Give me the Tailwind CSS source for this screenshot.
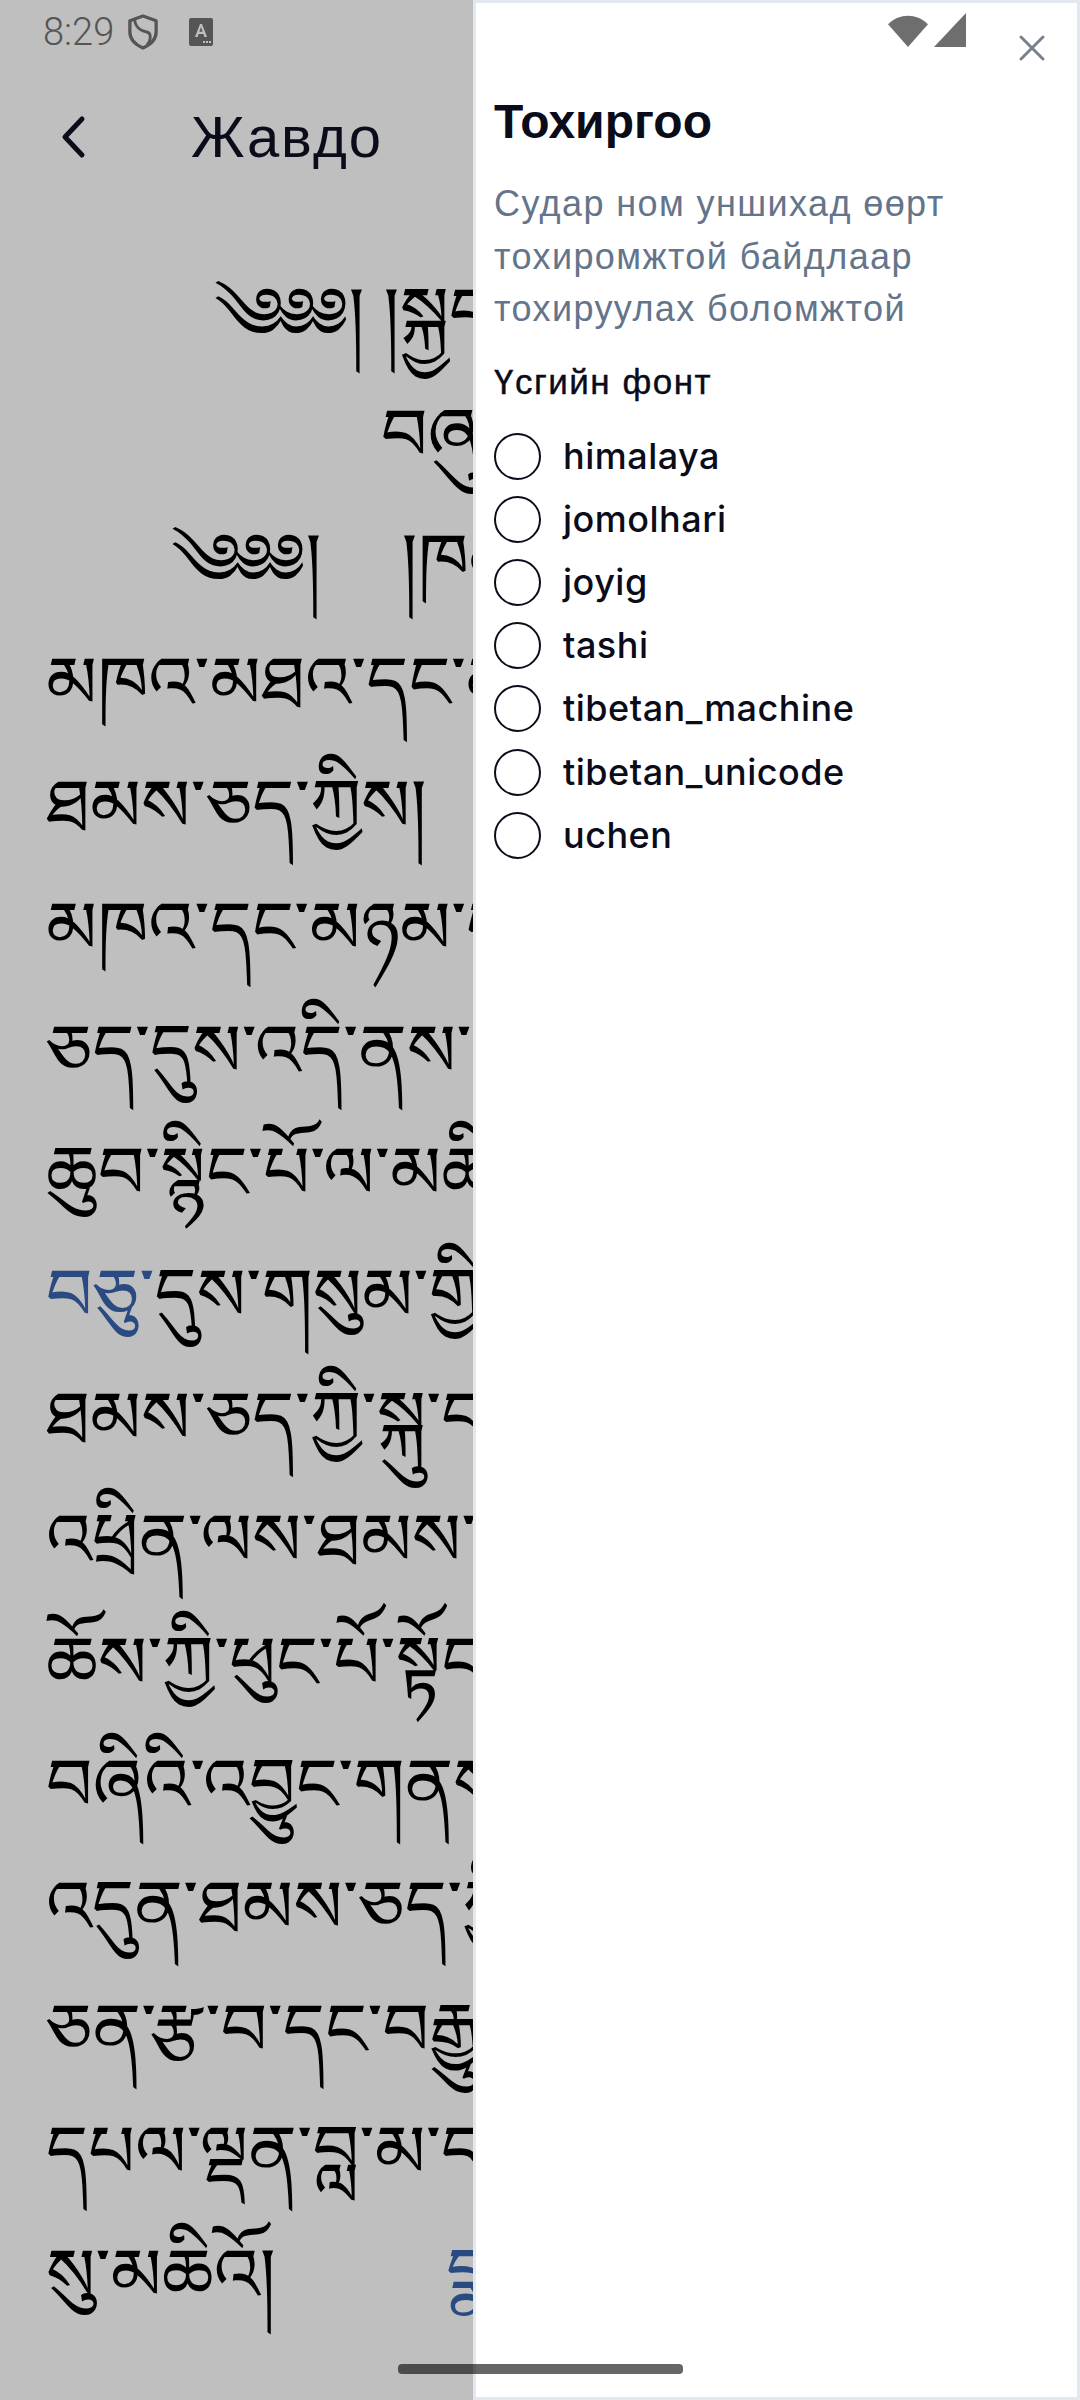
<!DOCTYPE html>
<html lang="mn">
<head>
    <meta charset="UTF-8">
    <meta name="viewport" content="width=device-width, initial-scale=1.0">
    <title>Жавдо</title>
    <script src="https://cdn.jsdelivr.net/npm/@tailwindcss/browser@4"></script>
</head>
<body class="bg-[#bfbfbf]">
    <div class="relative w-[1080px] h-[2400px] overflow-hidden font-['Liberation_Sans',sans-serif]">
        <!-- Status bar -->
        <div class="flex items-center h-[64px] pl-[43px] text-[#555] text-[38px] leading-none font-['Roboto',sans-serif] font-light">
            <span>8:29</span>
            <svg class="ml-[14px]" width="30" height="36" viewBox="0 0 32 38" fill="none" stroke="#555" stroke-width="3.5" stroke-linejoin="round"><path d="M16 2 L30 7 V19 C30 28 23 33 16 36 C9 33 2 28 2 19 V7 Z"/><path d="M7 6 C8 14 14 18 20 19 C25 20 25 28 20 33" stroke-width="3"/></svg>
            <svg class="ml-[31px]" width="24" height="28" viewBox="0 0 24 28"><rect width="24" height="28" rx="2" fill="#555"/><path d="M6 19 L11 6 H13 L18 19 H15.4 L14.4 16 H9.6 L8.6 19 Z M10.4 13.8 H13.6 L12 9 Z" fill="#bfbfbf"/><rect x="14" y="23" width="2" height="2" fill="#bfbfbf"/><rect x="17" y="23" width="2" height="2" fill="#bfbfbf"/><rect x="20" y="23" width="2" height="2" fill="#bfbfbf"/></svg>
        </div>
        <!-- Header -->
        <div class="flex items-center h-[74px] mt-[36px] text-[#0a0c1a]">
            <svg class="ml-[60px]" width="28" height="44" viewBox="0 0 28 44" fill="none" stroke="#0a0c1a" stroke-width="5" stroke-linecap="round" stroke-linejoin="round"><path d="M22 4 L5 22 L22 40"/></svg>
            <span class="ml-[103px] text-[58px] leading-none tracking-[1.8px]">Жавдо</span>
        </div>
        <!-- Tibetan text -->
        <div class="mt-[100px] pl-[46px] w-[1000px] text-black text-[73px] leading-[122.4px] whitespace-nowrap font-['Noto_Sans_Tibetan','Noto_Serif_Tibetan','DejaVu_Sans',sans-serif]">
            <div class="pl-[168px]">༄༅༅། །སྐྱབས་འགྲོ་</div>
            <div class="pl-[335px] leading-[80px] mt-[20px]">བཞུགས་སོ།</div>
            <div class="pl-[125px] leading-[100px] mt-[35px]">༄༅༅།&nbsp;&nbsp;&nbsp;<span class="ml-[23px]">།ཁམས་</span></div>
            <div class="mt-[12px]">མཁའ་མཐའ་དང་མཉམ་</div>
            <div>ཐམས་ཅད་ཀྱིས།</div>
            <div>མཁའ་དང་མཉམ་པའི་</div>
            <div>ཅད་དུས་འདི་ནས་བཟུང་</div>
            <div>ཆུབ་སྙིང་པོ་ལ་མཆི་</div>
            <div><span class="text-[#2a4a82]">བཅུ་</span>དུས་གསུམ་གྱི་</div>
            <div>ཐམས་ཅད་ཀྱི་སྐུ་བ་</div>
            <div>འཕྲིན་ལས་ཐམས་ཅད་</div>
            <div>ཆོས་ཀྱི་ཕུང་པོ་སྟོང་</div>
            <div>བཞིའི་འབྱུང་གནས་</div>
            <div>འདུན་ཐམས་ཅད་ཀྱི་</div>
            <div>ཅན་རྩ་བ་དང་བརྒྱུད་</div>
            <div>དཔལ་ལྡན་བླ་མ་དམ་</div>
            <div>སུ་མཆིའོ།<span class="ml-[170px] text-[#2a4a82]">བྣ་</span></div>
        </div>
        <!-- Drawer -->
        <div class="absolute top-0 bottom-0 right-0 w-[607px] bg-white border-[3px] border-[#e2e8f0]">
            <div class="absolute top-[10px] right-[111px] flex items-start gap-[4px]">
                <svg width="42" height="34" viewBox="0 0 40 36" preserveAspectRatio="none"><path d="M20 36 L1 12 C12 0 28 0 39 12 Z" fill="#6e6e6e"/></svg>
                <svg width="33" height="34" viewBox="0 0 33 36" preserveAspectRatio="none"><path d="M33 0 V36 H1 Z" fill="#6e6e6e"/></svg>
            </div>
            <button class="absolute top-[31px] right-[31px]">
                <svg width="28" height="28" viewBox="0 0 28 28" fill="none" stroke="#76808f" stroke-width="3" stroke-linecap="round"><path d="M3 3 L25 25 M25 3 L3 25"/></svg>
            </button>
            <div class="pt-[91px] pl-[18px] pr-[30px]">
                <h2 class="text-[48px] leading-[56px] font-bold text-[#0a0c1a]">Тохиргоо</h2>
                <p class="mt-[28px] text-[36px] leading-[52.5px] tracking-[1.4px] text-[#64748b]">Судар ном уншихад өөрт тохиромжтой байдлаар тохируулах боломжтой</p>
                <h3 class="mt-[22px] text-[35px] leading-[48px] tracking-[1.5px] text-[#0a0c1a] [-webkit-text-stroke:0.4px_#0a0c1a]">Үсгийн фонт</h3>
                <div class="mt-[19px] flex flex-col font-['Inter',sans-serif] font-medium text-[36px] leading-[63.2px] tracking-[0.5px] text-[#0a0c1a]">
                    <label class="flex items-center gap-[22px]"><span class="w-[47px] h-[47px] rounded-full border-[2px] border-[#0a0c1a]"></span>himalaya</label>
                    <label class="flex items-center gap-[22px]"><span class="w-[47px] h-[47px] rounded-full border-[2px] border-[#0a0c1a]"></span>jomolhari</label>
                    <label class="flex items-center gap-[22px]"><span class="w-[47px] h-[47px] rounded-full border-[2px] border-[#0a0c1a]"></span>joyig</label>
                    <label class="flex items-center gap-[22px]"><span class="w-[47px] h-[47px] rounded-full border-[2px] border-[#0a0c1a]"></span>tashi</label>
                    <label class="flex items-center gap-[22px]"><span class="w-[47px] h-[47px] rounded-full border-[2px] border-[#0a0c1a]"></span>tibetan_machine</label>
                    <label class="flex items-center gap-[22px]"><span class="w-[47px] h-[47px] rounded-full border-[2px] border-[#0a0c1a]"></span>tibetan_unicode</label>
                    <label class="flex items-center gap-[22px]"><span class="w-[47px] h-[47px] rounded-full border-[2px] border-[#0a0c1a]"></span>uchen</label>
                </div>
            </div>
        </div>
        <!-- Home indicator -->
        <div class="absolute left-[398px] top-[2364px] w-[285px] h-[10px] rounded-[4px] bg-black/60"></div>
    </div>
</body>
</html>
